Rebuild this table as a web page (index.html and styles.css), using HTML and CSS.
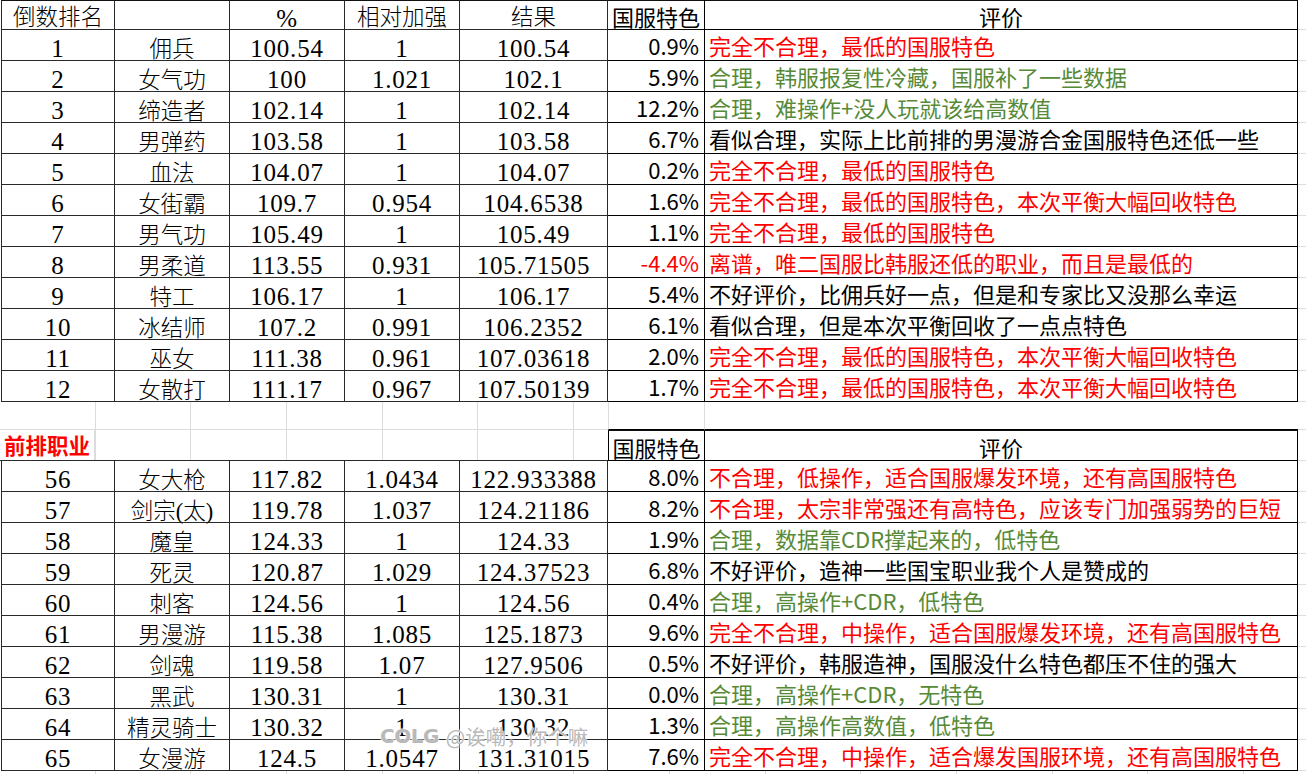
FILE: index.html
```html
<!DOCTYPE html>
<html lang="zh-CN">
<head>
<meta charset="utf-8">
<title>国服特色</title>
<link rel="stylesheet" href="styles.css">
</head>
<body>
<div class="sheet">
  <!-- header -->
  <div class="c lt k top cj">倒数排名</div><div class="c lt top"></div><div class="c lt top">%</div><div class="c lt top cj">相对加强</div><div class="c lt top cj">结果</div><div class="c pct hd top">国服特色</div><div class="c cm hd top">评价</div><div class="c fill"></div>

  <div class="c lt k">1</div><div class="c lt cj">佣兵</div><div class="c lt">100.54</div><div class="c lt">1</div><div class="c lt">100.54</div><div class="c pct">0.9%</div><div class="c cm red">完全不合理，最低的国服特色</div><div class="c fill"></div>
  <div class="c lt k">2</div><div class="c lt cj">女气功</div><div class="c lt">100</div><div class="c lt">1.021</div><div class="c lt">102.1</div><div class="c pct">5.9%</div><div class="c cm green">合理，韩服报复性冷藏，国服补了一些数据</div><div class="c fill"></div>
  <div class="c lt k">3</div><div class="c lt cj">缔造者</div><div class="c lt">102.14</div><div class="c lt">1</div><div class="c lt">102.14</div><div class="c pct">12.2%</div><div class="c cm green">合理，难操作+没人玩就该给高数值</div><div class="c fill"></div>
  <div class="c lt k">4</div><div class="c lt cj">男弹药</div><div class="c lt">103.58</div><div class="c lt">1</div><div class="c lt">103.58</div><div class="c pct">6.7%</div><div class="c cm">看似合理，实际上比前排的男漫游合金国服特色还低一些</div><div class="c fill"></div>
  <div class="c lt k">5</div><div class="c lt cj">血法</div><div class="c lt">104.07</div><div class="c lt">1</div><div class="c lt">104.07</div><div class="c pct">0.2%</div><div class="c cm red">完全不合理，最低的国服特色</div><div class="c fill"></div>
  <div class="c lt k">6</div><div class="c lt cj">女街霸</div><div class="c lt">109.7</div><div class="c lt">0.954</div><div class="c lt">104.6538</div><div class="c pct">1.6%</div><div class="c cm red">完全不合理，最低的国服特色，本次平衡大幅回收特色</div><div class="c fill"></div>
  <div class="c lt k">7</div><div class="c lt cj">男气功</div><div class="c lt">105.49</div><div class="c lt">1</div><div class="c lt">105.49</div><div class="c pct">1.1%</div><div class="c cm red">完全不合理，最低的国服特色</div><div class="c fill"></div>
  <div class="c lt k">8</div><div class="c lt cj">男柔道</div><div class="c lt">113.55</div><div class="c lt">0.931</div><div class="c lt">105.71505</div><div class="c pct red">-4.4%</div><div class="c cm red">离谱，唯二国服比韩服还低的职业，而且是最低的</div><div class="c fill"></div>
  <div class="c lt k">9</div><div class="c lt cj">特工</div><div class="c lt">106.17</div><div class="c lt">1</div><div class="c lt">106.17</div><div class="c pct">5.4%</div><div class="c cm">不好评价，比佣兵好一点，但是和专家比又没那么幸运</div><div class="c fill"></div>
  <div class="c lt k">10</div><div class="c lt cj">冰结师</div><div class="c lt">107.2</div><div class="c lt">0.991</div><div class="c lt">106.2352</div><div class="c pct">6.1%</div><div class="c cm">看似合理，但是本次平衡回收了一点点特色</div><div class="c fill"></div>
  <div class="c lt k">11</div><div class="c lt cj">巫女</div><div class="c lt">111.38</div><div class="c lt">0.961</div><div class="c lt">107.03618</div><div class="c pct">2.0%</div><div class="c cm red">完全不合理，最低的国服特色，本次平衡大幅回收特色</div><div class="c fill"></div>
  <div class="c lt k">12</div><div class="c lt cj">女散打</div><div class="c lt">111.17</div><div class="c lt">0.967</div><div class="c lt">107.50139</div><div class="c pct">1.7%</div><div class="c cm red">完全不合理，最低的国服特色，本次平衡大幅回收特色</div><div class="c fill"></div>

  <!-- gap -->
  <div class="gap-left">
    <div class="gap-blank"></div>
    <div class="gap-label">前排职业</div>
  </div>
  <div class="gap-b6"></div><div class="gap-b7"></div><div class="c fill"></div>
  <div class="c pct hd top edge">国服特色</div><div class="c cm hd top">评价</div><div class="c fill"></div>

  <div class="c lt k">56</div><div class="c lt cj">女大枪</div><div class="c lt">117.82</div><div class="c lt">1.0434</div><div class="c lt">122.933388</div><div class="c pct">8.0%</div><div class="c cm red">不合理，低操作，适合国服爆发环境，还有高国服特色</div><div class="c fill"></div>
  <div class="c lt k">57</div><div class="c lt cj">剑宗(太)</div><div class="c lt">119.78</div><div class="c lt">1.037</div><div class="c lt">124.21186</div><div class="c pct">8.2%</div><div class="c cm red">不合理，太宗非常强还有高特色，应该专门加强弱势的巨短</div><div class="c fill"></div>
  <div class="c lt k">58</div><div class="c lt cj">魔皇</div><div class="c lt">124.33</div><div class="c lt">1</div><div class="c lt">124.33</div><div class="c pct">1.9%</div><div class="c cm green">合理，数据靠CDR撑起来的，低特色</div><div class="c fill"></div>
  <div class="c lt k">59</div><div class="c lt cj">死灵</div><div class="c lt">120.87</div><div class="c lt">1.029</div><div class="c lt">124.37523</div><div class="c pct">6.8%</div><div class="c cm">不好评价，造神一些国宝职业我个人是赞成的</div><div class="c fill"></div>
  <div class="c lt k">60</div><div class="c lt cj">刺客</div><div class="c lt">124.56</div><div class="c lt">1</div><div class="c lt">124.56</div><div class="c pct">0.4%</div><div class="c cm green">合理，高操作+CDR，低特色</div><div class="c fill"></div>
  <div class="c lt k">61</div><div class="c lt cj">男漫游</div><div class="c lt">115.38</div><div class="c lt">1.085</div><div class="c lt">125.1873</div><div class="c pct">9.6%</div><div class="c cm red">完全不合理，中操作，适合国服爆发环境，还有高国服特色</div><div class="c fill"></div>
  <div class="c lt k">62</div><div class="c lt cj">剑魂</div><div class="c lt">119.58</div><div class="c lt">1.07</div><div class="c lt">127.9506</div><div class="c pct">0.5%</div><div class="c cm">不好评价，韩服造神，国服没什么特色都压不住的强大</div><div class="c fill"></div>
  <div class="c lt k">63</div><div class="c lt cj">黑武</div><div class="c lt">130.31</div><div class="c lt">1</div><div class="c lt">130.31</div><div class="c pct">0.0%</div><div class="c cm green">合理，高操作+CDR，无特色</div><div class="c fill"></div>
  <div class="c lt k">64</div><div class="c lt cj">精灵骑士</div><div class="c lt">130.32</div><div class="c lt">1</div><div class="c lt">130.32</div><div class="c pct">1.3%</div><div class="c cm green">合理，高操作高数值，低特色</div><div class="c fill"></div>
  <div class="c lt k">65</div><div class="c lt cj">女漫游</div><div class="c lt">124.5</div><div class="c lt">1.0547</div><div class="c lt">131.31015</div><div class="c pct">7.6%</div><div class="c cm red">完全不合理，中操作，适合爆发国服环境，还有高国服特色</div><div class="c fill"></div>

  <div class="tail"></div>

  <div class="watermark"><span class="wm-logo">COLG</span><span class="wm-user">@诶嘞，你个嘛</span></div>
</div>
</body>
</html>
```

FILE: styles.css
```css
* { box-sizing: border-box; }

body {
  margin: 0;
  background: #fff;
}

.sheet {
  position: relative;
  width: 1306px;
  height: 774px;
  padding-left: 1px;
  display: grid;
  grid-template-columns: 114px 115px 115px 115px 148px 97px 593px 1fr;
  grid-template-rows: 30px repeat(12, 31px) 28px 31px repeat(10, 31px) 1fr;
  overflow: hidden;
}

.c {
  display: flex;
  align-items: center;
  white-space: nowrap;
  line-height: 1;
  color: #000;
}

/* left table */
.lt {
  justify-content: center;
  border-right: 1px solid #2a2a2a;
  border-bottom: 1px solid #2a2a2a;
  padding-top: 6px;
  font-family: "Liberation Serif", "Noto Sans CJK SC", serif;
  font-size: 25px;
  letter-spacing: 0.8px;
}
.lt.k { border-left: 1px solid #2a2a2a; }
.lt.cj {
  font-family: "Liberation Serif", "Noto Sans CJK SC", serif;
  font-size: 22.5px;
  font-weight: 300;
  letter-spacing: 0;
  padding-top: 10px;
}
.lt.top.cj { padding-top: 6px; }
.top { border-top: 1px solid #111; }

/* right table */
.pct, .cm {
  font-family: "Noto Sans CJK SC", "Noto Sans", sans-serif;
  font-size: 22px;
  border-right: 1px solid #000;
  border-bottom: 1px solid #000;
}
.pct {
  justify-content: flex-end;
  padding-right: 5px;
}
.cm {
  justify-content: flex-start;
  padding-left: 4px;
}
.hd {
  justify-content: center;
  padding: 2px 0 0 0;
}
.edge { border-left: 1px solid #000; }

.red { color: #ff0000; }
.green { color: #578a37; }

/* gridline filler column */
.fill {
  border-bottom: 1px solid #dcdcdc;
}

/* gap between the two tables */
.gap-left {
  grid-row: span 2;
  grid-column: span 5;
  display: grid;
  grid-template-rows: 28px 1fr;
  border-bottom: 1px solid #2a2a2a;
  margin-left: -1px;
  background: repeating-linear-gradient(to right, transparent 0, transparent 94.7px, #dcdcdc 94.7px, #dcdcdc 95.7px);
}
.gap-blank {
  border-bottom: 1px solid #dcdcdc;
}
.gap-label {
  display: flex;
  align-items: center;
  padding-left: 4px;
  line-height: 1;
  font-family: "Noto Sans CJK SC", sans-serif;
  font-size: 21.5px;
  font-weight: 700;
  color: #ff0000;
  background: #fff;
  width: 95px;
  border-right: 1px solid #dcdcdc;
}
.gap-b6 {
  border-left: 1px solid #dcdcdc;
  border-right: 1px solid #dcdcdc;
  border-bottom: 1px solid #000;
}
.gap-b7 {
  border-bottom: 1px solid #000;
}

.tail {
  grid-column: 1 / -1;
  margin-left: -1px;
  background: repeating-linear-gradient(to right, transparent 0, transparent 94.7px, #dcdcdc 94.7px, #dcdcdc 95.7px);
}

/* watermark over the table */
.watermark {
  position: absolute;
  left: 380px;
  top: 726px;
  display: flex;
  align-items: center;
  gap: 7px;
  line-height: 1;
  color: rgba(175, 175, 175, 0.9);
  text-shadow: 0 0 2px #fff, 0 0 2px #fff, 0 0 1px #fff;
  white-space: nowrap;
}
.wm-logo {
  font-family: "DejaVu Sans", sans-serif;
  font-weight: 700;
  font-size: 20px;
  letter-spacing: -0.5px;
}
.wm-user {
  font-family: "Noto Sans CJK SC", sans-serif;
  font-size: 20.5px;
}
```
